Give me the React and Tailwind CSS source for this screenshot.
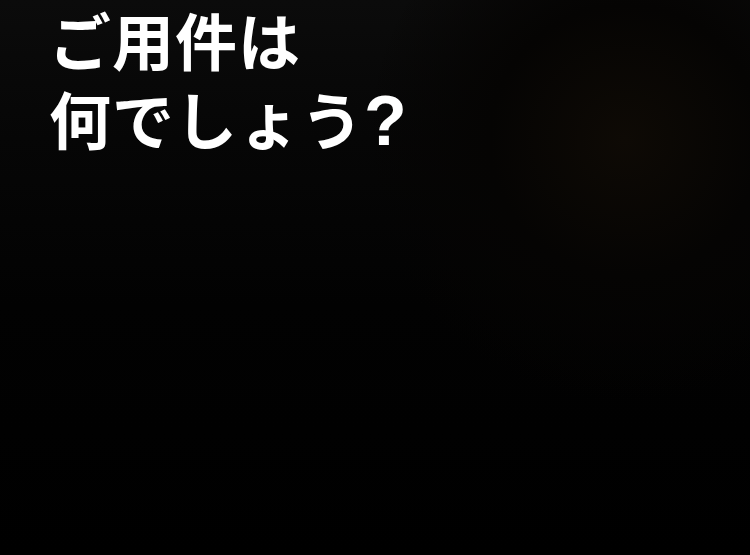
export default function App() {
  return (
    <div className="w-[750px] h-[555px] overflow-hidden bg-black bg-[radial-gradient(circle_at_625px_140px,#0e0a05_0%,#050403_18%,transparent_35%),linear-gradient(to_bottom,#0b0b0b_0%,#060606_25%,#020202_55%,#000000_100%)]">
      {/* Siri prompt */}
      <div className="pl-[49px] pt-[5px] text-white font-bold text-[62px] leading-[79px] tracking-[1px] font-['Liberation_Sans','Noto_Sans_CJK_JP',sans-serif]">
        <p>ご用件は</p>
        <p>
          何でしょう<span className="text-[70px] leading-none">?</span>
        </p>
      </div>
    </div>
  )
}
